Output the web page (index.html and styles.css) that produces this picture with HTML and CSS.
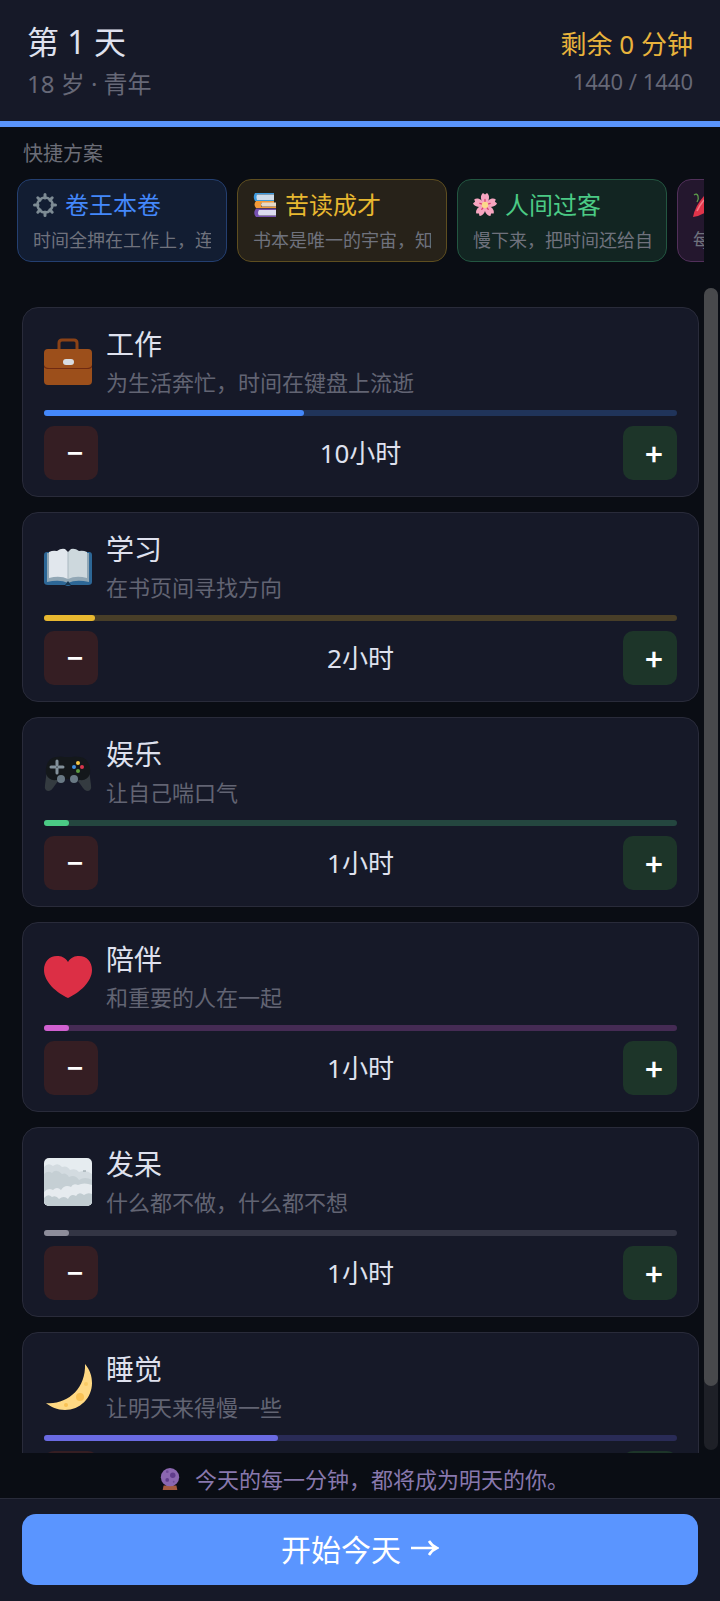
FILE: index.html
```html
<!DOCTYPE html>
<html lang="zh-CN">
<head>
  <meta charset="UTF-8">
  <meta name="viewport" content="width=device-width, initial-scale=1.0">
  <title>第 1 天</title>
  <link rel="stylesheet" href="styles.css">
</head>
<body>
  <header class="top-bar">
    <div class="day-info">
      <h1 class="day">第 1 天</h1>
      <p class="age">18 岁 · 青年</p>
    </div>
    <div class="time-info">
      <p class="remaining">剩余 0 分钟</p>
      <p class="total">1440 / 1440</p>
    </div>
  </header>

  <section class="presets">
    <h2 class="presets-label">快捷方案</h2>
    <div class="preset-list">
      <button class="preset blue" type="button">
        <span class="preset-title">
          <svg class="preset-icon" viewBox="0 0 24 24">
            <g stroke="#7d8b94" stroke-width="3" stroke-linecap="round">
              <path d="M12 1.500V5M12 19v3.500M1.500 12H5M19 12h3.500M4.800 4.800l2.300 2.300M16.900 16.900l2.300 2.300M4.800 19.200l2.300-2.300M16.900 7.100l2.300-2.300"/>
            </g>
            <circle cx="12" cy="12" r="7.500" fill="none" stroke="#7d8b94" stroke-width="2.600"/>
          </svg>
          卷王本卷
        </span>
        <span class="preset-desc">时间全押在工作上，连</span>
      </button>
      <button class="preset yellow" type="button">
        <span class="preset-title">
          <svg class="preset-icon" viewBox="0 0 24 24">
            <path d="M2 0h19v1.500H4v5.500h17v1H2Q-.5 4 2 0z" fill="#3d9be0"/>
            <path d="M4 1.500h17v5.500H4Q2.500 4.500 4 1.500z" fill="#cfdcea"/>
            <path d="M3 8h18v2H8v3.500h15V15H3Q0 11.500 3 8z" fill="#f29a38"/>
            <path d="M9 9.500h14v4H9Q7 11.500 9 9.500z" fill="#e6d9c8"/>
            <path d="M3 15.500h20v1.500H6v5.500h17V24H3Q-.5 20 3 15.500z" fill="#7650b0"/>
            <path d="M6 17h17v5.500H6Q4 20 6 17z" fill="#dcdcf0"/>
          </svg>
          苦读成才
        </span>
        <span class="preset-desc">书本是唯一的宇宙，知</span>
      </button>
      <button class="preset green" type="button">
        <span class="preset-title">
          <svg class="preset-icon" viewBox="0 0 24 24">
            <defs>
              <path id="petal" d="M12 12C7 8 7 2 10 0l2 1.600L14 0c3 2 3 8-2 12z"/>
            </defs>
            <g fill="#f7a5c0">
              <use href="#petal"/>
              <use href="#petal" transform="rotate(72 12 12)"/>
              <use href="#petal" transform="rotate(144 12 12)"/>
              <use href="#petal" transform="rotate(216 12 12)"/>
              <use href="#petal" transform="rotate(288 12 12)"/>
            </g>
            <g stroke="#d9416f" stroke-width="1.300" stroke-linecap="round">
              <path d="M12 12V6.500M12 12l5.200-1.700M12 12l3.200 4.400M12 12l-3.200 4.400M12 12l-5.200-1.700"/>
            </g>
            <circle cx="12" cy="12" r="3.200" fill="#fbd98a"/>
          </svg>
          人间过客
        </span>
        <span class="preset-desc">慢下来，把时间还给自</span>
      </button>
      <button class="preset purple" type="button">
        <span class="preset-title">
          <svg class="preset-icon" viewBox="0 0 24 24">
            <path d="M1 2q3-2 4 1t-1 6" fill="none" stroke="#5c9c4a" stroke-width="1.300"/>
            <path d="M0 24Q2 13 11 3l10 9Q12 22 0 24z" fill="#e0344a"/>
            <path d="M4 18Q6 13 11 7" fill="none" stroke="#f47a86" stroke-width="1.600"/>
          </svg>
        </span>
        <span class="preset-desc">每</span>
      </button>
    </div>
  </section>

  <main class="activities">
    <div class="activity-list">
      <article class="card blue">
        <div class="card-head">
          <svg class="card-icon" viewBox="0 0 48 48">
            <path d="M15 12V5q0-3 3-3h12q3 0 3 3v7" fill="none" stroke="#8b4216" stroke-width="3"/>
            <rect x="0" y="11" width="48" height="36" rx="4" fill="#9c4f1b"/>
            <path d="M0 27q1 3 5 3h38q4 0 5-3v2q-1 2-5 2H5q-4 0-5-2z" fill="#6f2a12"/>
            <rect x="19" y="21" width="11" height="6" rx="3" fill="#d8dce2"/>
          </svg>
          <div>
            <h3 class="card-title">工作</h3>
            <p class="card-desc">为生活奔忙，时间在键盘上流逝</p>
          </div>
        </div>
        <div class="bar"><div class="bar-fill" style="width: 41%"></div></div>
        <div class="stepper">
          <button class="minus" type="button" aria-label="减少工作">–</button>
          <span class="hours">10小时</span>
          <button class="plus" type="button" aria-label="增加工作">+</button>
        </div>
      </article>

      <article class="card yellow">
        <div class="card-head">
          <svg class="card-icon" viewBox="0 0 48 48">
            <path d="M3 9h42q3 0 3 3v27q0 3-4 3H27q-1 1-3 1t-3-1H4q-4 0-4-3V12q0-3 3-3z" fill="#2d6796"/>
            <path d="M3 10h42v29q-13-3-21 1-8-4-21-1z" fill="#91a7b5"/>
            <path d="M5 9Q9 7 13 8q4-3 8-2l3 3v27q-8-4-19-1z" fill="#e1e7ed"/>
            <path d="M43 9q-4-2-8-1-4-3-8-2l-3 3v27q8-4 19-1z" fill="#cdd8dd"/>
            <path d="M24 9v27" stroke="#a9b7c0"/>
            <path d="M21 42l3-4 3 4z" fill="#163650"/>
          </svg>
          <div>
            <h3 class="card-title">学习</h3>
            <p class="card-desc">在书页间寻找方向</p>
          </div>
        </div>
        <div class="bar"><div class="bar-fill" style="width: 8%"></div></div>
        <div class="stepper">
          <button class="minus" type="button" aria-label="减少学习">–</button>
          <span class="hours">2小时</span>
          <button class="plus" type="button" aria-label="增加学习">+</button>
        </div>
      </article>

      <article class="card green">
        <div class="card-head">
          <svg class="card-icon" viewBox="0 0 48 48">
            <path d="M3 22L1 37q-1 6 4 6 2 0 4-3l5-7zM45 22l2 15q1 6-4 6-2 0-4-3l-5-7z" fill="#343b40"/>
            <path d="M12 9q5-1 8 0h8q3-1 8 0c8 1 11 9 10 17q-3 7-10 6l-5-1H17l-5 1Q5 33 2 26C1 18 4 10 12 9z" fill="#14181b"/>
            <path d="M13 13v4M13 21v4M7 19h4M15 19h4" stroke="#84929b" stroke-width="3" stroke-linecap="round"/>
            <circle cx="34" cy="15" r="2" fill="#f6c844"/>
            <circle cx="38" cy="19" r="2" fill="#d9364c"/>
            <circle cx="34" cy="23" r="2" fill="#5c9c42"/>
            <circle cx="30" cy="19" r="2" fill="#4290e0"/>
            <circle cx="17" cy="31" r="4" fill="#697984"/>
            <circle cx="30" cy="31" r="4" fill="#697984"/>
          </svg>
          <div>
            <h3 class="card-title">娱乐</h3>
            <p class="card-desc">让自己喘口气</p>
          </div>
        </div>
        <div class="bar"><div class="bar-fill" style="width: 4%"></div></div>
        <div class="stepper">
          <button class="minus" type="button" aria-label="减少娱乐">–</button>
          <span class="hours">1小时</span>
          <button class="plus" type="button" aria-label="增加娱乐">+</button>
        </div>
      </article>

      <article class="card purple">
        <div class="card-head">
          <svg class="card-icon" viewBox="0 0 48 48">
            <path d="M24 9C27 4 31 3 35 3c8 0 13 6 13 14 0 12-13 23-24 28C13 40 0 29 0 17 0 9 5 3 13 3c4 0 8 1 11 6z" fill="#dc2f45"/>
          </svg>
          <div>
            <h3 class="card-title">陪伴</h3>
            <p class="card-desc">和重要的人在一起</p>
          </div>
        </div>
        <div class="bar"><div class="bar-fill" style="width: 4%"></div></div>
        <div class="stepper">
          <button class="minus" type="button" aria-label="减少陪伴">–</button>
          <span class="hours">1小时</span>
          <button class="plus" type="button" aria-label="增加陪伴">+</button>
        </div>
      </article>

      <article class="card gray">
        <div class="card-head">
          <svg class="card-icon" viewBox="0 0 48 48">
            <defs>
              <clipPath id="fog"><rect width="48" height="48" rx="5"/></clipPath>
            </defs>
            <g clip-path="url(#fog)">
              <rect width="48" height="48" fill="#e6ecf0"/>
              <path d="M0 9q4-5 9-1 5-4 9 1 5-2 8 3 6-2 9 2 7-3 13 2v32H0z" fill="#d3dbe0"/>
              <path d="M0 16q4-4 8-1 4-5 10 1 4-2 7 3 6-3 10 3 6-4 13 0v25H0z" fill="#c5cfd4"/>
              <path d="M0 34q4-5 9-2 4-4 8 0 4-6 10-3 2-4 7-2 6-3 14 0v20H0z" fill="#e6ebef"/>
              <path d="M0 40q4-5 8-1 4-2 7 2 5-4 9 0 3-6 8-3 3-5 8-1 4-3 8-1v12H0z" fill="#c1ccd1"/>
              <path d="M39 13h3" stroke="#8b999f"/>
            </g>
          </svg>
          <div>
            <h3 class="card-title">发呆</h3>
            <p class="card-desc">什么都不做，什么都不想</p>
          </div>
        </div>
        <div class="bar"><div class="bar-fill" style="width: 4%"></div></div>
        <div class="stepper">
          <button class="minus" type="button" aria-label="减少发呆">–</button>
          <span class="hours">1小时</span>
          <button class="plus" type="button" aria-label="增加发呆">+</button>
        </div>
      </article>

      <article class="card indigo">
        <div class="card-head">
          <svg class="card-icon" viewBox="0 0 48 48">
            <path d="M41 1c5 6 7 12 7 19 0 15-12 27-27 27C13 47 7 44 2 40c21 2 40-14 39-39z" fill="#ffd983"/>
            <circle cx="36" cy="34" r="4" fill="#f9c254"/>
            <circle cx="42" cy="21" r="2" fill="#f9cb66"/>
            <circle cx="22" cy="42" r="2" fill="#f9c254"/>
          </svg>
          <div>
            <h3 class="card-title">睡觉</h3>
            <p class="card-desc">让明天来得慢一些</p>
          </div>
        </div>
        <div class="bar"><div class="bar-fill" style="width: 37%"></div></div>
        <div class="stepper">
          <button class="minus" type="button" aria-label="减少睡觉"></button>
          <button class="plus" type="button" aria-label="增加睡觉"></button>
        </div>
      </article>
    </div>
    <div class="scroll-track"><div class="scroll-thumb"></div></div>
  </main>

  <p class="quote">
    <svg class="quote-icon" viewBox="0 0 24 24">
      <path d="M5 19h14l1 5H4z" fill="#a65a40"/>
      <circle cx="12" cy="10" r="10" fill="#8b67b0"/>
      <circle cx="15" cy="8" r="3" fill="#603d8b"/>
      <circle cx="9" cy="13" r="2" fill="#603d8b"/>
      <circle cx="9" cy="4" r="1.500" fill="#704c99"/>
      <circle cx="16" cy="15" r="1" fill="#704c99"/>
    </svg>
    今天的每一分钟，都将成为明天的你。
  </p>

  <footer class="bottom-bar">
    <button class="start" type="button">
      开始今天
      <svg class="arrow" viewBox="0 0 28 16">
        <path d="M0 8h26M18 1q3 5 8 7-5 2-8 7" fill="none" stroke="#fff" stroke-width="2.600"/>
      </svg>
    </button>
  </footer>
</body>
</html>
```

FILE: styles.css
```css
* {
  box-sizing: border-box;
}

body {
  display: flex;
  flex-direction: column;
  height: 100vh;
  margin: 0;
  overflow: hidden;
  background: #0a0d14;
  color: #dfe1ee;
  font-family: "Noto Sans", "Noto Sans CJK SC", sans-serif;
}

h1, h2, h3, p {
  margin: 0;
  font-weight: 400;
}

button {
  font-family: inherit;
  cursor: pointer;
}

/* 每种活动的颜色 */
.blue {
  --color: #4488fb;
  --track: #20345a;
  --bg: #121d32;
  --border: #243f70;
}

.yellow {
  --color: #e8b830;
  --track: #483e28;
  --bg: #272219;
  --border: #5e4e20;
}

.green {
  --color: #4bca85;
  --track: #24463f;
  --bg: #122522;
  --border: #235641;
}

.purple {
  --color: #d060d0;
  --track: #452b54;
  --bg: #24172e;
  --border: #51305a;
}

.gray {
  --color: #8d8d9a;
  --track: #333544;
}

.indigo {
  --color: #6a6ae2;
  --track: #292b56;
}

.top-bar {
  display: flex;
  justify-content: space-between;
  align-items: center;
  padding: 20px 27px 17px;
  background: #161928;
  border-bottom: 6px solid #5a94fc;
}

.day {
  font-size: 32px;
  line-height: 44px;
}

.age {
  font-size: 24px;
  line-height: 40px;
  color: #666877;
}

.time-info {
  text-align: right;
}

.remaining {
  font-size: 26px;
  line-height: 38px;
  color: #e8b33c;
}

.total {
  font-size: 22px;
  line-height: 36px;
  color: #666877;
}

.presets {
  padding: 11px 16px 20px 17px;
}

.presets-label {
  margin: 0 0 9px 6px;
  font-size: 20px;
  line-height: 32px;
  color: #6c6e78;
}

.preset-list {
  display: flex;
  gap: 10px;
  overflow: hidden;
}

.preset {
  flex: 0 0 210px;
  min-width: 0;
  padding: 8px 15px 3px;
  border: 1px solid var(--border);
  border-radius: 14px;
  background: var(--bg);
  text-align: left;
}

.preset-title {
  display: flex;
  align-items: center;
  gap: 8px;
  height: 34px;
  font-size: 24px;
  line-height: 34px;
  color: var(--color);
}

.preset-icon {
  width: 24px;
  height: 24px;
}

.preset-desc {
  display: block;
  overflow: hidden;
  font-size: 18px;
  line-height: 36px;
  white-space: nowrap;
  color: #6f727d;
}

.activities {
  display: flex;
  flex: 1;
  gap: 5px;
  min-height: 0;
  padding: 0 2px 0 22px;
}

.activity-list {
  flex: 1;
  overflow-y: auto;
  padding-top: 25px;
  scrollbar-width: none;
}

.card {
  margin-bottom: 15px;
  padding: 16px 21px;
  border: 1px solid #292b3a;
  border-radius: 16px;
  background: #161928;
}

.card-head {
  display: flex;
  align-items: center;
  gap: 14px;
  margin-bottom: 10px;
}

.card-icon {
  width: 48px;
  height: 48px;
}

.card-title {
  font-size: 28px;
  line-height: 40px;
}

.card-desc {
  font-size: 22px;
  line-height: 36px;
  color: #626473;
}

.bar {
  height: 6px;
  margin-bottom: 10px;
  border-radius: 3px;
  background: var(--track);
}

.bar-fill {
  height: 6px;
  border-radius: 3px;
  background: var(--color);
}

.stepper {
  display: flex;
  justify-content: space-between;
  align-items: center;
}

.minus, .plus {
  width: 54px;
  height: 54px;
  padding: 0 0 2px 8px;
  border: none;
  border-radius: 10px;
  color: #fff;
  font-family: Inter, sans-serif;
  font-size: 28px;
  font-weight: 500;
}

.minus {
  background: #351e23;
}

.plus {
  background: #1d3529;
  font-size: 32px;
}

.hours {
  padding-bottom: 2px;
  font-size: 26px;
}

.scroll-track {
  width: 14px;
  margin: 6px 0 3px;
  border-radius: 7px;
  background: #1e2027;
}

.scroll-thumb {
  height: 94.5%;
  border-radius: 7px;
  background: #48494c;
}

.quote {
  display: flex;
  justify-content: center;
  align-items: center;
  gap: 14px;
  height: 45px;
  padding: 6px 0 0 8px;
  font-size: 22px;
  line-height: 36px;
  color: #8878ad;
}

.quote-icon {
  width: 22px;
  height: 22px;
}

.bottom-bar {
  padding: 15px 22px 16px;
  border-top: 1px solid #292b3a;
  background: #161928;
}

.start {
  display: flex;
  justify-content: center;
  align-items: center;
  gap: 10px;
  width: 100%;
  height: 71px;
  padding-bottom: 4px;
  border: none;
  border-radius: 14px;
  background: #5a95ff;
  color: #fff;
  font-size: 30px;
}

.arrow {
  width: 28px;
  height: 16px;
}
```
